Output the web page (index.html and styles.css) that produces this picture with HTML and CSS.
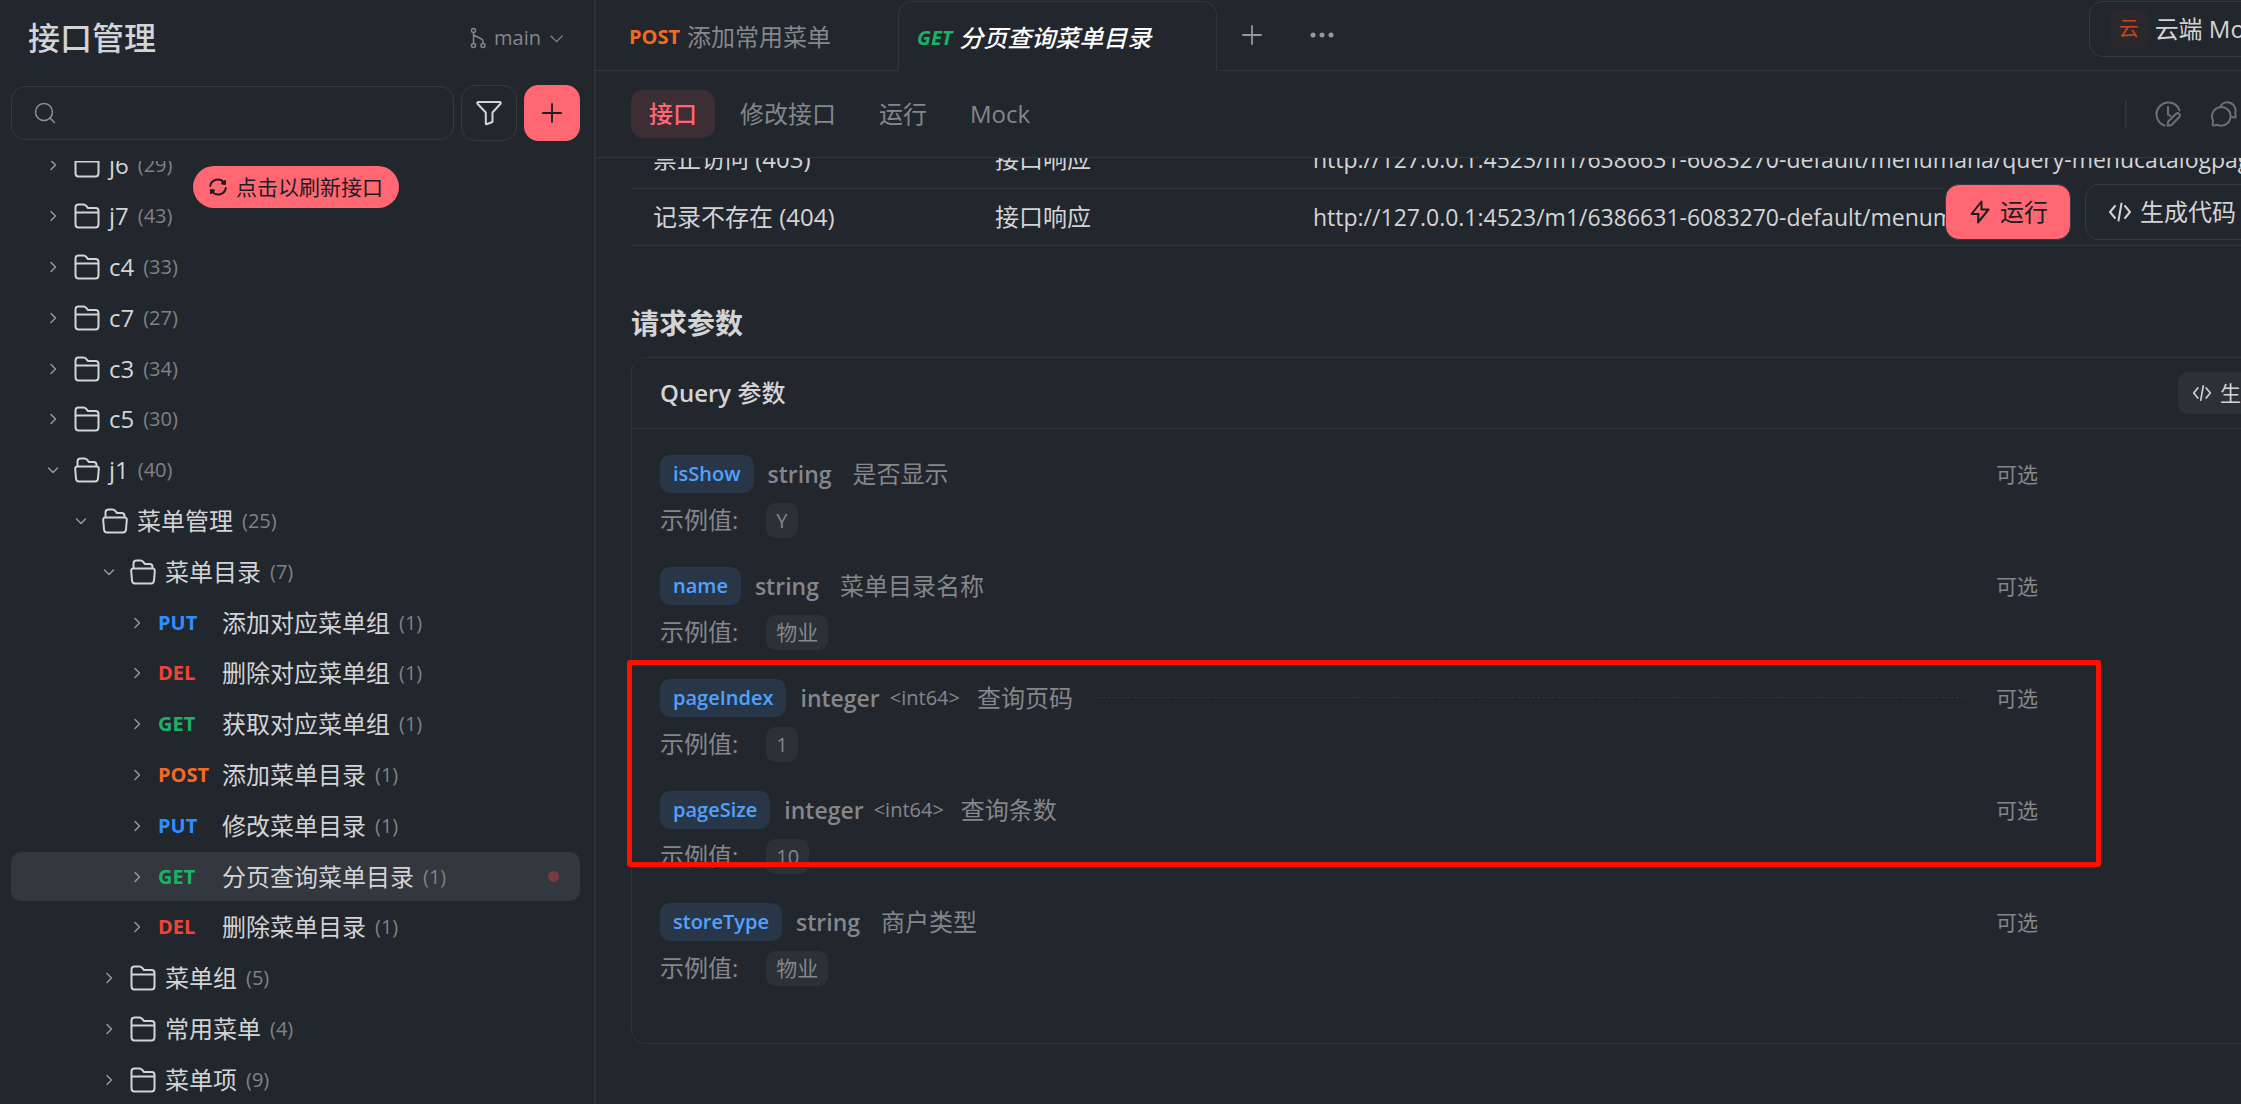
FILE: index.html
```html
<!DOCTYPE html>
<html lang="zh-CN">

<head>
  <meta charset="utf-8">
  <title>接口管理</title>
  <link rel="stylesheet" href="styles.css">
</head>

<body>
  <!-- shared icons -->
  <svg class="sprite" width="0" height="0" aria-hidden="true">
    <symbol id="right" viewBox="0 0 12 12">
      <path d="M4 1.5 8.5 6 4 10.5" />
    </symbol>
    <symbol id="down" viewBox="0 0 12 12">
      <path d="M1.5 4 6 8.5 10.5 4" />
    </symbol>
    <symbol id="folder" viewBox="0 0 26 26">
      <path d="M1.5 21V4.500Q1.500 1.500 4.500 1.500H9.500Q11 1.500 12 2.700L14 5H21.500Q24.500 5 24.500 8V21Q24.500 24.500 21.500 24.500H4.500Q1.500 24.500 1.500 21ZM1.500 9.500H24.500" />
    </symbol>
    <symbol id="folder-open" viewBox="0 0 26 26">
      <path d="M3.500 9.500V4.500Q3.500 1.500 6.500 1.500H10.500Q12 1.500 13 2.700L15 5H19.500Q22.500 5 22.500 8V9.500M3.500 9.500H22.500Q25 9.500 24.800 12L24 21.500Q23.700 24.500 21 24.500H5Q2.300 24.500 2 21.500L1.200 12Q1 9.500 3.500 9.500Z" />
    </symbol>
    <symbol id="code" viewBox="0 0 24 20">
      <path d="M7 4 2 10 7 16M17 4 22 10 17 16M13.500 1.500 10.500 18.500" />
    </symbol>
    <symbol id="plus" viewBox="0 0 22 22">
      <path d="M11 1V21M1 11H21" />
    </symbol>
  </svg>

  <div class="app">
    <aside class="sidebar">
      <header class="sideHead">
        <h1>接口管理</h1>
        <button class="branch">
          <svg class="icon branchIcon" viewBox="0 0 16 22">
            <circle cx="3.500" cy="3.500" r="2" />
            <circle cx="3.500" cy="18.500" r="2" />
            <circle cx="13" cy="18.500" r="2" />
            <path d="M3.500 5.500V16.500M3.500 8 11.500 12Q13 12.800 13 14.500V16.500" />
          </svg>
          main
          <svg class="icon branchArrow"><use href="#down" /></svg>
        </button>
      </header>

      <div class="tools">
        <label class="search">
          <svg class="icon searchIcon" viewBox="0 0 22 22">
            <circle cx="10" cy="10" r="8.500" />
            <path d="M16 16 20.500 20.500" />
          </svg>
          <input type="text" aria-label="搜索">
        </label>
        <button class="toolButton" aria-label="筛选">
          <svg class="icon filterIcon" viewBox="0 0 26 26">
            <path d="M2.500 2H23.500Q25.500 2 24.300 4L16.500 12.500V22L10.500 24.200Q9.800 24.400 9.800 23.500V12.500L1.700 4Q.5 2 2.500 2Z" />
          </svg>
        </button>
        <button class="toolButton primary" aria-label="新建">
          <svg class="icon plusIcon"><use href="#plus" /></svg>
        </button>
      </div>

      <div class="treeWrap">
        <ul class="tree">
          <li class="node"><svg class="icon arrow"><use href="#right" /></svg><svg class="icon folder"><use href="#folder" /></svg><span class="label">j6</span><span class="count">(29)</span></li>
          <li class="node"><svg class="icon arrow"><use href="#right" /></svg><svg class="icon folder"><use href="#folder" /></svg><span class="label">j7</span><span class="count">(43)</span></li>
          <li class="node"><svg class="icon arrow"><use href="#right" /></svg><svg class="icon folder"><use href="#folder" /></svg><span class="label">c4</span><span class="count">(33)</span></li>
          <li class="node"><svg class="icon arrow"><use href="#right" /></svg><svg class="icon folder"><use href="#folder" /></svg><span class="label">c7</span><span class="count">(27)</span></li>
          <li class="node"><svg class="icon arrow"><use href="#right" /></svg><svg class="icon folder"><use href="#folder" /></svg><span class="label">c3</span><span class="count">(34)</span></li>
          <li class="node"><svg class="icon arrow"><use href="#right" /></svg><svg class="icon folder"><use href="#folder" /></svg><span class="label">c5</span><span class="count">(30)</span></li>
          <li class="node"><svg class="icon arrow"><use href="#down" /></svg><svg class="icon folder"><use href="#folder-open" /></svg><span class="label">j1</span><span class="count">(40)</span></li>
          <li class="node level1"><svg class="icon arrow"><use href="#down" /></svg><svg class="icon folder"><use href="#folder-open" /></svg><span class="label">菜单管理</span><span class="count">(25)</span></li>
          <li class="node level2"><svg class="icon arrow"><use href="#down" /></svg><svg class="icon folder"><use href="#folder-open" /></svg><span class="label">菜单目录</span><span class="count">(7)</span></li>
          <li class="node level3"><svg class="icon arrow"><use href="#right" /></svg><span class="method put">PUT</span><span class="label">添加对应菜单组</span><span class="count">(1)</span></li>
          <li class="node level3"><svg class="icon arrow"><use href="#right" /></svg><span class="method del">DEL</span><span class="label">删除对应菜单组</span><span class="count">(1)</span></li>
          <li class="node level3"><svg class="icon arrow"><use href="#right" /></svg><span class="method get">GET</span><span class="label">获取对应菜单组</span><span class="count">(1)</span></li>
          <li class="node level3"><svg class="icon arrow"><use href="#right" /></svg><span class="method post">POST</span><span class="label">添加菜单目录</span><span class="count">(1)</span></li>
          <li class="node level3"><svg class="icon arrow"><use href="#right" /></svg><span class="method put">PUT</span><span class="label">修改菜单目录</span><span class="count">(1)</span></li>
          <li class="node level3 selected"><svg class="icon arrow"><use href="#right" /></svg><span class="method get">GET</span><span class="label">分页查询菜单目录</span><span class="count">(1)</span><span class="dot"></span></li>
          <li class="node level3"><svg class="icon arrow"><use href="#right" /></svg><span class="method del">DEL</span><span class="label">删除菜单目录</span><span class="count">(1)</span></li>
          <li class="node level2"><svg class="icon arrow"><use href="#right" /></svg><svg class="icon folder"><use href="#folder" /></svg><span class="label">菜单组</span><span class="count">(5)</span></li>
          <li class="node level2"><svg class="icon arrow"><use href="#right" /></svg><svg class="icon folder"><use href="#folder" /></svg><span class="label">常用菜单</span><span class="count">(4)</span></li>
          <li class="node level2"><svg class="icon arrow"><use href="#right" /></svg><svg class="icon folder"><use href="#folder" /></svg><span class="label">菜单项</span><span class="count">(9)</span></li>
        </ul>
        <button class="refresh">
          <svg class="icon refreshIcon" viewBox="0 0 18 18">
            <path d="M1.200 8A7.800 7.800 0 0 1 15 4.500M16.800 10A7.800 7.800 0 0 1 3 13.500" />
            <path class="solid" d="M16 3V6L13 5.500ZM2 15V12L5 12.500Z" />
          </svg>
          点击以刷新接口
        </button>
      </div>
    </aside>

    <main class="main">
      <div class="tabBar">
        <button class="tab"><span class="method post">POST</span>添加常用菜单</button>
        <button class="tab current"><span class="method get">GET</span>分页查询菜单目录</button>
        <div class="tabRest">
          <button class="iconButton" aria-label="新标签"><svg class="icon plusIcon"><use href="#plus" /></svg></button>
          <button class="iconButton" aria-label="更多">
            <svg class="dots" viewBox="0 0 24 6">
              <circle cx="3" cy="3" r="2.500" />
              <circle cx="12" cy="3" r="2.500" />
              <circle cx="21" cy="3" r="2.500" />
            </svg>
          </button>
          <button class="env"><span class="envTag">云</span>云端 Mock<svg class="icon branchArrow"><use href="#down" /></svg></button>
        </div>
      </div>

      <nav class="subTabs">
        <a class="subTab active" href="#">接口</a>
        <a class="subTab" href="#">修改接口</a>
        <a class="subTab" href="#">运行</a>
        <a class="subTab" href="#">Mock</a>
        <div class="subActions">
          <button class="iconButton" aria-label="历史">
            <svg class="icon actionIcon" viewBox="0 0 26 26">
              <path d="M9.500 24.500A11.800 11.800 0 1 1 24.500 9.500M13 6V13.500L15.500 15M12.500 24.800 13.200 20.500 21 12.700Q22.500 11.500 24 12.800T24.300 16L16.500 24Z" />
            </svg>
          </button>
          <button class="iconButton" aria-label="评论">
            <svg class="icon actionIcon" viewBox="0 0 26 26">
              <path d="M9.500 5A8.200 8.200 0 0 1 24.300 11.500L24.800 15.500Q24.800 16.700 23.500 16.500L20.500 16" />
              <path d="M2 19.500A9.300 9.300 0 1 1 6.500 23.800L3 24.600Q1.500 24.800 1.700 23.300Z" />
            </svg>
          </button>
        </div>
      </nav>

      <div class="content">
        <table class="mocks">
          <tr>
            <td class="caseCol">禁止访问 (403)</td>
            <td class="kindCol">接口响应</td>
            <td class="url">http://127.0.0.1:4523/m1/6386631-6083270-default/menumana/query-menucatalogpage</td>
          </tr>
          <tr>
            <td class="caseCol">记录不存在 (404)</td>
            <td class="kindCol">接口响应</td>
            <td class="url">http://127.0.0.1:4523/m1/6386631-6083270-default/menumana/query-menucatalogpage</td>
          </tr>
        </table>
        <div class="floatBar">
          <button class="bigButton primary">
            <svg class="icon boltIcon" viewBox="0 0 20 24">
              <path d="M11.500 1.500 1.500 14H8.500L8 22.500 18.500 9.500H11.500Z" />
            </svg>
            运行
          </button>
          <button class="bigButton"><svg class="icon codeIcon"><use href="#code" /></svg>生成代码</button>
        </div>

        <h2>请求参数</h2>
        <section class="card">
          <header class="cardHead">
            <h3>Query <span class="light">参数</span></h3>
            <button class="smallButton"><svg class="icon codeSmall"><use href="#code" /></svg>生成代码</button>
          </header>
          <div class="params">
            <div class="param">
              <div class="paramHead"><code class="name">isShow</code><span class="type">string</span><span class="desc">是否显示</span><span class="optional">可选</span></div>
              <div class="example">示例值:<span class="chip">Y</span></div>
            </div>
            <div class="param">
              <div class="paramHead"><code class="name">name</code><span class="type">string</span><span class="desc">菜单目录名称</span><span class="optional">可选</span></div>
              <div class="example">示例值:<span class="chip cjk">物业</span></div>
            </div>
            <div class="param">
              <div class="paramHead"><code class="name">pageIndex</code><span class="type">integer</span><span class="format">&lt;int64&gt;</span><span class="desc">查询页码</span><span class="line"></span><span class="optional">可选</span></div>
              <div class="example">示例值:<span class="chip">1</span></div>
            </div>
            <div class="param">
              <div class="paramHead"><code class="name">pageSize</code><span class="type">integer</span><span class="format">&lt;int64&gt;</span><span class="desc">查询条数</span><span class="optional">可选</span></div>
              <div class="example">示例值:<span class="chip">10</span></div>
            </div>
            <div class="param">
              <div class="paramHead"><code class="name">storeType</code><span class="type">string</span><span class="desc">商户类型</span><span class="optional">可选</span></div>
              <div class="example">示例值:<span class="chip cjk">物业</span></div>
            </div>
            <!-- red frame round the paging params -->
            <div class="mark"></div>
          </div>
        </section>
      </div>
    </main>
  </div>
</body>

</html>
```

FILE: styles.css
```css
* {
  box-sizing: border-box;
}

body {
  margin: 0;
  overflow: hidden;
  background: #22262d;
  color: #d3d4d6;
  font-family: "Open Sans", "Noto Sans CJK SC", sans-serif;
  font-size: 24px;
  line-height: 32px;
}

h1,
h2,
h3,
ul {
  margin: 0;
  padding: 0;
}

button,
input {
  font: inherit;
  color: inherit;
  background: none;
  border: none;
  padding: 0;
  outline: none;
}

button {
  display: flex;
  align-items: center;
  justify-content: center;
  white-space: nowrap;
}

.sprite {
  position: absolute;
}

.icon {
  fill: none;
  stroke: currentColor;
  stroke-width: 2;
  stroke-linecap: round;
  stroke-linejoin: round;
  flex-shrink: 0;
}

.solid {
  fill: currentColor;
}

/* the pane on the right runs past the window edge */
.app {
  display: flex;
  width: calc(100vw + 120px);
  height: 100vh;
}

/* sidebar */
.sidebar {
  width: 596px;
  flex-shrink: 0;
  display: flex;
  flex-direction: column;
  border-right: 2px solid #2c3037;
}

.sideHead {
  display: flex;
  align-items: center;
  justify-content: space-between;
  height: 76px;
  padding: 0 30px 0 28px;
}

h1 {
  font-size: 32px;
  font-weight: 500;
}

.branch {
  color: #84878b;
  font-size: 20px;
  font-weight: 500;
  gap: 8px;
}

.branchIcon {
  width: 16px;
  height: 22px;
}

.branchArrow {
  width: 15px;
  height: 15px;
  stroke-width: 1;
}

.branchIcon,
.searchIcon {
  stroke-width: 1.5;
}

.tools {
  display: flex;
  align-items: center;
  gap: 7px;
  padding: 9px 14px 0 11px;
}

.search {
  flex-grow: 1;
  display: flex;
  align-items: center;
  height: 54px;
  padding: 0 22px;
  border: 1px solid #353941;
  border-radius: 14px;
  color: #909296;
}

.search input {
  flex-grow: 1;
  margin-left: 10px;
}

.searchIcon {
  width: 22px;
  height: 22px;
}

.toolButton {
  width: 56px;
  height: 56px;
  border: 1px solid #353941;
  border-radius: 14px;
}

.filterIcon {
  width: 26px;
  height: 26px;
}

.plusIcon {
  width: 20px;
  height: 20px;
}

.primary {
  background: #ff6773;
  border-color: #ff6773;
  color: #1c1d20;
}

.treeWrap {
  position: relative;
  flex-grow: 1;
  display: flex;
  margin-top: 20px;
  overflow: hidden;
}

/* scrolled a little, so the first row is cut */
.tree {
  flex-grow: 1;
  display: flex;
  flex-direction: column;
  gap: 2px;
  margin: -20px 14px 0 11px;
  list-style: none;
}

.node {
  flex: 1 0 48px;
  display: flex;
  align-items: center;
  padding-left: 36px;
  border-radius: 10px;
}

.level1 {
  padding-left: 64px;
}

.level2 {
  padding-left: 92px;
}

.level3 {
  padding-left: 120px;
}

.selected {
  background: #33373e;
}

.arrow {
  width: 12px;
  height: 12px;
  margin-right: 15px;
  stroke-width: 1.5;
  color: #96989b;
}

.folder {
  width: 26px;
  height: 26px;
  margin-right: 9px;
}

.count {
  margin-left: 9px;
  font-size: 20px;
  color: #7f8286;
}

.method {
  font-size: 20px;
  font-weight: 700;
}

.node .method {
  width: 64px;
  flex-shrink: 0;
}

.put {
  color: #2e8fff;
}

.del {
  color: #f04438;
}

.get {
  color: #1bb267;
}

.post {
  color: #f26b21;
}

.dot {
  width: 11px;
  height: 11px;
  margin: 0 21px 0 auto;
  border-radius: 50%;
  background: #763c3f;
}

.refresh {
  position: absolute;
  top: 5px;
  left: 193px;
  height: 42px;
  padding: 0 16px;
  gap: 9px;
  border-radius: 21px;
  background: #ff6773;
  color: #1c1d20;
  font-size: 21px;
}

.refreshIcon {
  width: 18px;
  height: 18px;
}

/* tabs */
.main {
  flex-grow: 1;
  min-width: 0;
  display: flex;
  flex-direction: column;
}

.tabBar {
  display: flex;
  height: 71px;
}

.tab {
  gap: 7px;
  padding: 4px 67px 0 33px;
  border-bottom: 1px solid #30343b;
  color: #84878b;
}

.current {
  padding: 4px 65px 0 18px;
  border: 1px solid #30343b;
  border-bottom-color: transparent;
  border-radius: 14px 14px 0 0;
  margin-top: 1px;
  color: #fff;
  font-style: italic;
  font-weight: 500;
}

.tabRest {
  flex-grow: 1;
  display: flex;
  align-items: center;
  padding-left: 24px;
  border-bottom: 1px solid #30343b;
  color: #96989b;
}

.iconButton {
  width: 22px;
  height: 56px;
}

.iconButton + .iconButton {
  margin-left: 48px;
}

.dots {
  width: 24px;
  height: 6px;
  flex-shrink: 0;
  fill: currentColor;
}

.env {
  height: 56px;
  margin: 0 49px 12px auto;
  padding: 0 20px;
  gap: 7px;
  border: 1px solid #353941;
  border-radius: 14px;
  color: #d3d4d6;
}

.envTag {
  width: 38px;
  height: 38px;
  line-height: 38px;
  border-radius: 7px;
  background: #2b282d;
  color: #c4471f;
  font-size: 20px;
}

.subTabs {
  display: flex;
  align-items: center;
  height: 87px;
  padding-left: 35px;
  gap: 7px;
  border-bottom: 1px solid #30343b;
}

.subTab {
  padding: 8px 18px;
  border-radius: 12px;
  color: #84878b;
  text-decoration: none;
}

.active {
  background: #3d2d35;
  color: #ff6773;
  font-weight: 500;
}

.subActions {
  display: flex;
  align-items: center;
  height: 28px;
  margin-left: auto;
  margin-right: 124px;
  padding-left: 28px;
  border-left: 2px solid #2e3239;
  color: #6d7074;
}

.actionIcon {
  width: 26px;
  height: 26px;
}

.subActions .iconButton {
  width: 26px;
  margin-left: 0;
}

.subActions .iconButton + .iconButton {
  margin-left: 30px;
}

/* content */
.content {
  position: relative;
  flex-grow: 1;
  padding: 0 28px 0 35px;
  overflow: hidden;
}

.mocks {
  width: 100%;
  margin-top: -27px;
  border-collapse: collapse;
  table-layout: fixed;
}

.mocks td {
  height: 57px;
  padding: 0 0 0 22px;
  border-bottom: 1px solid #30343b;
  white-space: nowrap;
}

.mocks .caseCol {
  width: 342px;
}

.mocks .kindCol {
  width: 318px;
}

.mocks .url {
  font-size: 23px;
}

.floatBar {
  position: absolute;
  top: 26px;
  right: 0;
  display: flex;
  gap: 14px;
  width: 416px;
  background: #22262d;
}

.bigButton {
  height: 56px;
  padding: 0 22px;
  gap: 8px;
  border: 1px solid #353941;
  border-radius: 14px;
}

.boltIcon {
  width: 24px;
  height: 24px;
}

.codeIcon {
  width: 24px;
  height: 20px;
}

h2 {
  margin-top: 57px;
  font-size: 28px;
  line-height: 40px;
  font-weight: 700;
}

.card {
  margin-top: 14px;
  border: 1px solid #2e3239;
  border-radius: 14px;
}

.cardHead {
  display: flex;
  align-items: center;
  justify-content: space-between;
  height: 71px;
  padding: 0 14px 0 28px;
  border-bottom: 1px solid #2e3239;
}

h3 {
  font-size: 24px;
  font-weight: 600;
}

.light {
  font-weight: 500;
}

.smallButton {
  height: 42px;
  padding: 0 14px;
  gap: 8px;
  border-radius: 10px;
  background: #2c3037;
  font-size: 21px;
}

.codeSmall {
  width: 20px;
  height: 18px;
}

.params {
  position: relative;
  display: flex;
  flex-direction: column;
  gap: 29px;
  padding: 26px 294px 57px 28px;
  color: #84878b;
}

.paramHead {
  display: flex;
  align-items: center;
}

.name {
  height: 38px;
  padding: 0 13px;
  margin-right: 14px;
  border-radius: 10px;
  background: #293648;
  color: #51a2ff;
  font-family: inherit;
  font-size: 20px;
  line-height: 38px;
  font-weight: 600;
}

.type {
  font-size: 23px;
  font-weight: 600;
}

.format {
  margin-left: 10px;
  font-size: 20px;
}

.desc {
  margin-left: 21px;
}

.format + .desc {
  margin-left: 17px;
}

.line {
  flex-grow: 1;
  margin: 0 32px 0 25px;
  border-top: 1px dashed #31353c;
}

.optional {
  margin-left: auto;
  font-size: 21px;
}

.line + .optional {
  margin-left: 0;
}

.example {
  display: flex;
  align-items: center;
  margin-top: 10px;
}

.chip {
  height: 35px;
  margin-left: 28px;
  padding: 0 10px;
  border-radius: 9px;
  background: #2c3037;
  font-size: 20px;
  line-height: 35px;
}

.cjk {
  font-size: 21px;
}

.mark {
  position: absolute;
  top: 231px;
  left: -5px;
  right: 231px;
  height: 207px;
  border: 5px solid #ff0f00;
  border-radius: 3px;
}
```
